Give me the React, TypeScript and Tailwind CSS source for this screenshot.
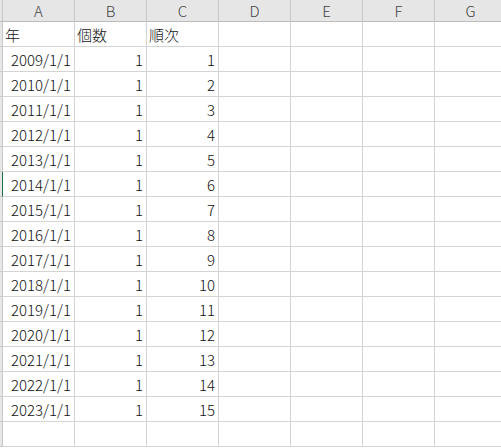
import React from "react";

const cols = ["A", "B", "C", "D", "E", "F", "G"];
const rows: [string, string, string][] = [["年", "個数", "順次"]];
for (let i = 0; i < 15; i++) rows.push([`${2009 + i}/1/1`, "1", String(i + 1)]);
rows.push(["", "", ""]);

export default function App() {
  return (
    <div
      className="w-[501px] h-[448px] overflow-hidden bg-white text-[#111]"
      style={{ fontFamily: '"Noto Sans CJK JP", "Noto Sans", sans-serif' }}
    >
      <div className="flex h-[22px] bg-[#e6e6e6] border-b border-[#bcbcbc]">
        <div className="w-[3px] shrink-0 border-r border-[#c8c8c8]" />
        {cols.map((c) => (
          <div
            key={c}
            className="w-[72px] shrink-0 border-r border-[#c8c8c8] flex items-center justify-center text-[15px] font-light text-[#444] leading-none"
          >
            {c}
          </div>
        ))}
      </div>
      {rows.map((r, ri) => (
        <div key={ri} className="flex h-[25px]">
          <div
            className={`w-[3px] shrink-0 bg-[#e6e6e6] border-r border-b ${
              ri === 6 ? "border-r-[#217346] border-b-[#c8c8c8]" : "border-[#c8c8c8]"
            }`}
          />
          {cols.map((c, ci) => {
            const v = ci < 3 ? r[ci] : "";
            const right = ri > 0 && ci < 3;
            return (
              <div
                key={c}
                className={`w-[72px] shrink-0 border-r border-b border-[#d4d4d4] flex items-end pb-[4px] text-[15px] font-light leading-none ${
                  right ? "justify-end pr-[3px]" : "justify-start pl-[2px]"
                }`}
              >
                {v}
              </div>
            );
          })}
        </div>
      ))}
    </div>
  );
}
